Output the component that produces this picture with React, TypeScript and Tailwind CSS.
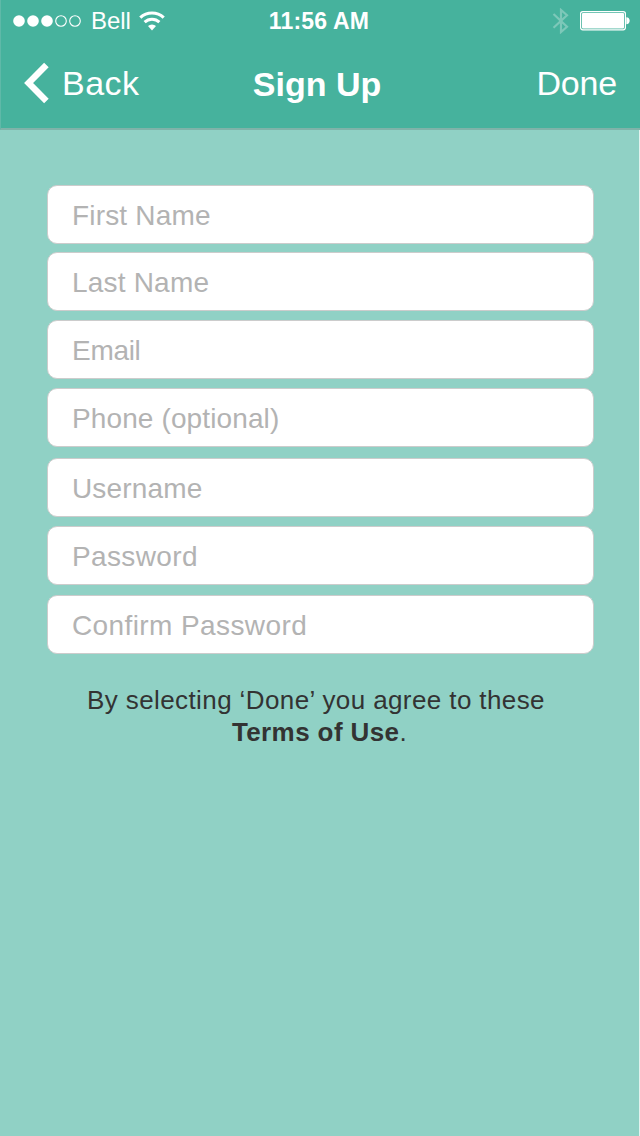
const fields = [
  { label: 'First Name', gap: 'mt-0', tracking: 'tracking-[0.18px]' },
  { label: 'Last Name', gap: 'mt-2', tracking: 'tracking-[0.2px]' },
  { label: 'Email', gap: 'mt-[9px]', tracking: 'tracking-[-0.3px]' },
  { label: 'Phone (optional)', gap: 'mt-[8.5px]', tracking: 'tracking-[0.12px]' },
  { label: 'Username', gap: 'mt-[11.5px]', tracking: 'tracking-[0.15px]' },
  { label: 'Password', gap: 'mt-[9px]', tracking: 'tracking-[0.36px]' },
  { label: 'Confirm Password', gap: 'mt-[10px]', tracking: 'tracking-[0.4px]' },
];

function SignalDots() {
  return (
    <svg width="70" height="14" viewBox="0 0 70 14" className="block" fill="#fff">
      <circle cx="7" cy="7" r="5.8" />
      <circle cx="21" cy="7" r="5.8" />
      <circle cx="35" cy="7" r="5.8" />
      <circle cx="49" cy="7" r="5.3" fill="none" stroke="#fff" strokeWidth="1.1" />
      <circle cx="63" cy="7" r="5.3" fill="none" stroke="#fff" strokeWidth="1.1" />
    </svg>
  );
}

function Wifi() {
  return (
    <svg width="28" height="20" viewBox="0 0 28 20" className="block" fill="none" stroke="#fff">
      <path d="M1.3 6.6A17.2 17.2 0 0 1 24.7 6.6" strokeWidth="3.2" />
      <path d="M5.6 11.1A10.8 10.8 0 0 1 20.4 11.1" strokeWidth="3" />
      <path d="M9 15A5.8 5.8 0 0 1 17 15L13 19.4Z" fill="#fff" stroke="none" />
    </svg>
  );
}

function Bluetooth() {
  return (
    <svg width="18" height="26" viewBox="0 0 18 26" className="block" fill="none" stroke="#7dc8b9" strokeWidth="2.2">
      <path d="M1.5 6L15 18.8L9 24V2L15 7.3L1.5 19.8" />
    </svg>
  );
}

function Battery() {
  return (
    <svg width="50" height="20" viewBox="0 0 50 20" className="block" fill="#fff">
      <rect x="0.6" y="0.6" width="44.8" height="18.2" rx="2.2" fill="none" stroke="#fff" strokeWidth="1.2" />
      <rect x="2" y="2" width="42" height="15.4" rx="1" />
      <path d="M46.3 6.2C50.8 6.2 50.8 13.2 46.3 13.2Z" />
    </svg>
  );
}

export default function App() {
  return (
    <div className="h-[1136px] w-[640px] overflow-hidden bg-[#90d1c5] font-['Liberation_Sans',Arial,sans-serif]">
      <header className="h-[130px] border-b-2 border-l border-b-[#7fb3a9] border-l-[#5fb9a8] bg-[#46b29d] text-white">
        <div className="grid h-[41px] grid-cols-3 items-center">
          <div className="flex items-center pl-[11px]">
            <SignalDots />
            <span className="ml-[9px] w-[48px] text-[24px] leading-[28px] tracking-[-0.1px]">Bell</span>
            <Wifi />
          </div>
          <span className="pr-[3px] text-center text-[23px] leading-[28px] font-bold tracking-[0.2px]">11:56 AM</span>
          <div className="flex items-center justify-end gap-[10px] pr-[10px]">
            <Bluetooth />
            <Battery />
          </div>
        </div>
        <nav className="grid h-[85px] grid-cols-3 items-center">
          <button className="flex items-center pb-[2px] pl-[23px]">
            <svg width="26" height="42" viewBox="0 0 26 42" className="block" fill="none" stroke="#fff" strokeWidth="6.4">
              <path d="M22.4 3L4.6 21L22.4 39" />
            </svg>
            <span className="ml-[12px] text-[34px] leading-[40px] tracking-[0.5px]">Back</span>
          </button>
          <h1 className="pt-px pr-[7px] text-center text-[34px] leading-[40px] font-bold">Sign Up</h1>
          <button className="pr-[23px] pb-[2px] text-right text-[34px] leading-[40px] tracking-[-0.2px]">Done</button>
        </nav>
      </header>
      <main className="border-r border-[#e2f3ef] pt-[55px]">
        <form className="ml-[47px] w-[547px]">
          {fields.map(({ label, gap, tracking }) => (
            <div key={label} className={`${gap} flex h-[59px] items-center rounded-[10px] border border-[#cccccc] bg-white pl-6`}>
              <span className={`pt-[3px] text-[28px] leading-[32px] text-[#b3b3b3] ${tracking}`}>{label}</span>
            </div>
          ))}
        </form>
        <p className="mt-[30px] h-[452px] pr-[7px] text-center text-[26px] leading-[32px] tracking-[0.4px] text-[#333333]">
          By selecting ‘Done’ you agree to these
          <br />
          <span className="pl-[7px]"><strong>Terms of Use</strong>.</span>
        </p>
      </main>
    </div>
  );
}
